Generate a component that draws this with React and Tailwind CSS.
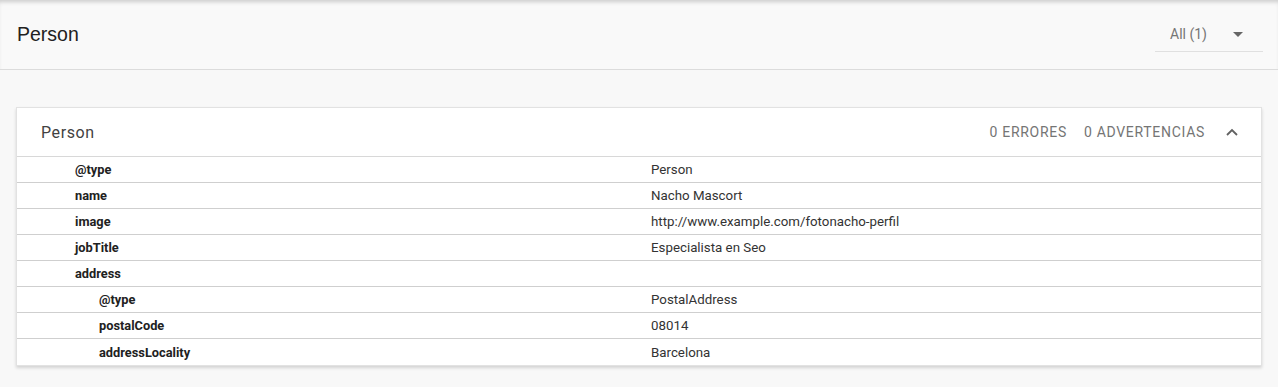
import React from "react";

const rows = [
  { k: "@type", v: "Person", d: 0 },
  { k: "name", v: "Nacho Mascort", d: 0 },
  { k: "image", v: "http://www.example.com/fotonacho-perfil", d: 0 },
  { k: "jobTitle", v: "Especialista en Seo", d: 0 },
  { k: "address", v: "", d: 0 },
  { k: "@type", v: "PostalAddress", d: 1 },
  { k: "postalCode", v: "08014", d: 1 },
  { k: "addressLocality", v: "Barcelona", d: 1 },
];

export default function App() {
  return (
    <div className="w-[1278px] h-[387px] bg-[#f8f8f8] overflow-hidden" style={{ fontFamily: "Roboto, 'Liberation Sans', sans-serif" }}>
      <div className="h-[70px] border-b border-[#dcdcdc] bg-[#f9f9f9] flex items-center justify-between pl-[17px] pr-[15px] shadow-[inset_0_4px_4px_-2px_rgba(0,0,0,0.18)]">
        <div className="text-[19.5px] text-[#212121] pt-[1px]" style={{ fontFamily: "'Liberation Sans', Arial, sans-serif" }}>Person</div>
        <div className="w-[108px] h-[36px] mt-[16px] border-b border-[#e0e0e0] flex items-center justify-between pl-[15px] pr-[20px] pt-[1px] self-start">
          <span className="text-[14px] text-[#757575]">All (1)</span>
          <svg width="10" height="5" viewBox="0 0 10 5"><path d="M0 0 L10 0 L5 5 Z" fill="#666" /></svg>
        </div>
      </div>
      <div className="mt-[37px] mx-[16px] bg-white border border-[#e2e2e2] shadow-[0_2px_3px_rgba(0,0,0,0.15)]">
        <div className="h-[49px] flex items-center justify-between pl-[24px] pr-[23px] border-b border-[#d8d8d8] pt-[1px]">
          <div className="text-[16px] text-[#424242] tracking-[0.6px]">Person</div>
          <div className="flex items-center text-[14px] text-[#757575] tracking-[0.7px]">
            <span>0 ERRORES</span>
            <span className="ml-[17px]">0 ADVERTENCIAS</span>
            <svg className="ml-[21px] mb-[1px]" width="12" height="8" viewBox="0 0 12 8"><path d="M1 7 L6 2 L11 7" stroke="#616161" strokeWidth="1.8" fill="none" /></svg>
          </div>
        </div>
        {rows.map((r, i) => (
          <div key={i} className={`h-[26px] flex items-center pt-[1px] ${i < rows.length - 1 ? "border-b border-[#cfcfcf]" : ""}`}>
            <div className={`${r.d ? "pl-[82px]" : "pl-[58px]"} w-[634px] text-[12.8px] font-bold text-[#212121]`}>{r.k}</div>
            <div className="text-[13.3px] text-[#333]">{r.v}</div>
          </div>
        ))}
      </div>
    </div>
  );
}
